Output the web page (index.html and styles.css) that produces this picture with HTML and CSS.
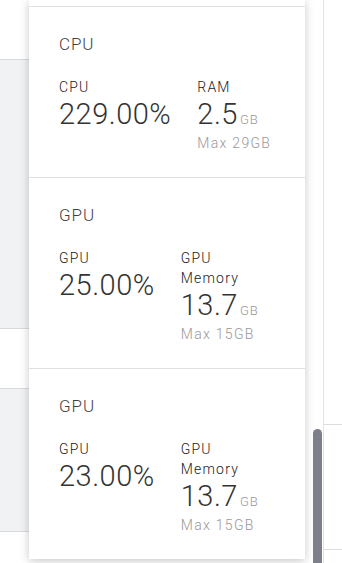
FILE: index.html
```html
<!DOCTYPE html>
<html>
<head>
<meta charset="utf-8">
<link rel="stylesheet" href="styles.css">
</head>
<body>
<div class="page">
  <div class="left-strip">
    <div class="lrow lrow-1"></div>
    <div class="lrow lrow-2 shaded"></div>
    <div class="lrow lrow-3"></div>
    <div class="lrow lrow-4 shaded"></div>
    <div class="lrow lrow-5"></div>
  </div>
  <div class="middle"></div>
  <div class="right-strip">
    <div class="rrow rrow-1"></div>
    <div class="rrow rrow-2"></div>
    <div class="rrow rrow-3"></div>
  </div>

  <div class="popover">
    <div class="pop-top"></div>
    <section class="group">
      <h3 class="group-title">CPU</h3>
      <div class="metrics">
        <div class="metric">
          <div class="label">CPU</div>
          <div class="value">229.00%</div>
        </div>
        <div class="metric narrow">
          <div class="label">RAM</div>
          <div class="value">2.5<span class="unit">GB</span></div>
          <div class="max">Max 29GB</div>
        </div>
      </div>
    </section>
    <section class="group">
      <h3 class="group-title">GPU</h3>
      <div class="metrics">
        <div class="metric">
          <div class="label">GPU</div>
          <div class="value">25.00%</div>
        </div>
        <div class="metric narrow">
          <div class="label">GPU Memory</div>
          <div class="value">13.7<span class="unit">GB</span></div>
          <div class="max">Max 15GB</div>
        </div>
      </div>
    </section>
    <section class="group">
      <h3 class="group-title">GPU</h3>
      <div class="metrics">
        <div class="metric">
          <div class="label">GPU</div>
          <div class="value">23.00%</div>
        </div>
        <div class="metric narrow">
          <div class="label">GPU Memory</div>
          <div class="value">13.7<span class="unit">GB</span></div>
          <div class="max">Max 15GB</div>
        </div>
      </div>
    </section>
  </div>
  <div class="scroll-thumb"></div>
</div>
</body>
</html>
```
FILE: styles.css
```css
* { box-sizing: border-box; }
html, body { margin: 0; padding: 0; }
body {
  font-family: Roboto, "Liberation Sans", sans-serif;
  background: #fff;
}
.page {
  position: relative;
  display: flex;
  width: 342px;
  height: 563px;
  overflow: hidden;
}
.left-strip {
  width: 29px;
  display: flex;
  flex-direction: column;
}
.lrow { border-bottom: 1px solid #d9dadd; background: #fff; }
.lrow.shaded { background: #f1f2f4; }
.lrow-1 { height: 60px; }
.lrow-2 { height: 269px; }
.lrow-3 { height: 60px; }
.lrow-4 { height: 143px; }
.lrow-5 { flex: 1; border-bottom: 0; }
.middle { flex: 1; background: #fff; }
.right-strip {
  width: 19px;
  border-left: 1px solid #e2e3e5;
  display: flex;
  flex-direction: column;
}
.rrow { border-bottom: 1px solid #dcdde0; }
.rrow-1 { height: 425px; }
.rrow-2 { height: 125px; }
.rrow-3 { flex: 1; border-bottom: 0; }

.popover {
  position: absolute;
  left: 29px;
  top: 0;
  width: 276px;
  height: 559px;
  background: #fff;
  overflow: hidden;
  box-shadow: 0 2px 9px rgba(0, 0, 0, 0.22);
}
.pop-top { height: 6px; }
.group {
  border-top: 1px solid #e0e0e0;
  padding: 27px 30px 24px;
}
.group-title {
  margin: 0 0 23px;
  font-size: 17px;
  line-height: 20px;
  font-weight: 300;
  color: #3f3f3f;
  letter-spacing: 0.9px;
}
.metrics {
  display: flex;
  align-items: flex-start;
  gap: 26px;
}
.metric.narrow { width: min-content; }
.label {
  font-size: 14px;
  line-height: 20px;
  font-weight: 300;
  color: #1a1a1a;
  letter-spacing: 1.2px;
}
.value {
  font-size: 29px;
  line-height: 34px;
  font-weight: 300;
  color: #333;
  white-space: nowrap;
  letter-spacing: 0.5px;
}
.unit {
  font-size: 13px;
  line-height: 1;
  font-weight: 300;
  color: #999;
  margin-left: 2px;
  letter-spacing: 0.8px;
}
.max {
  margin-top: 2px;
  font-size: 14px;
  line-height: 20px;
  font-weight: 300;
  color: #999;
  white-space: nowrap;
  letter-spacing: 1.3px;
}
.scroll-thumb {
  position: absolute;
  left: 313px;
  top: 429px;
  width: 9px;
  bottom: 0;
  background: #7c8089;
  border-radius: 5px 5px 0 0;
}
```
